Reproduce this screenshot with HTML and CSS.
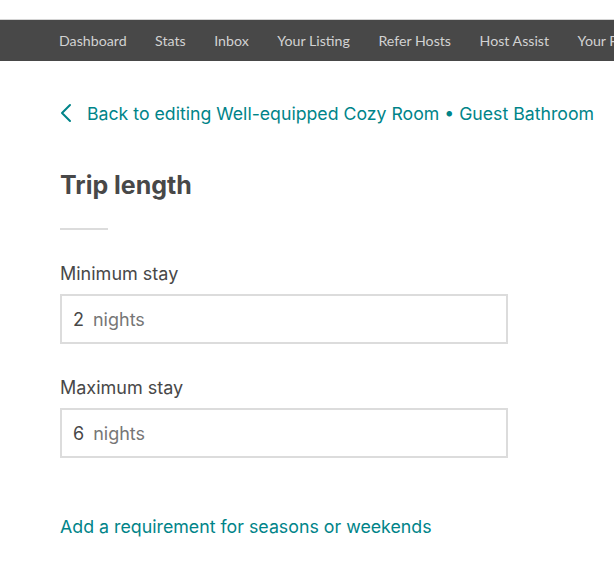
FILE: index.html
```html
<!DOCTYPE html>
<html>
<head>
<meta charset="utf-8">
<link rel="stylesheet" href="styles.css">
</head>
<body>
<div class="topspace"></div>
<nav class="navbar">
  <a class="nav-item">Dashboard</a>
  <a class="nav-item">Stats</a>
  <a class="nav-item">Inbox</a>
  <a class="nav-item">Your Listing</a>
  <a class="nav-item">Refer Hosts</a>
  <a class="nav-item">Host Assist</a>
  <a class="nav-item">Your Profile</a>
</nav>
<main class="content">
  <a class="back-link">
    <svg class="chev" width="12" height="20" viewBox="0 0 12 20"><path d="M10 2 L2 10 L10 18" fill="none" stroke="#008489" stroke-width="2" stroke-linecap="round" stroke-linejoin="round"/></svg>
    <span>Back to editing Well-equipped Cozy Room • Guest Bathroom</span>
  </a>
  <h1 class="title">Trip length</h1>
  <div class="divider"></div>
  <div class="field">
    <label class="label">Minimum stay</label>
    <div class="input"><span class="num">2</span><span class="unit">nights</span></div>
  </div>
  <div class="field">
    <label class="label">Maximum stay</label>
    <div class="input"><span class="num">6</span><span class="unit">nights</span></div>
  </div>
  <a class="add-link">Add a requirement for seasons or weekends</a>
</main>
</body>
</html>
```
FILE: styles.css
```css
* { box-sizing: border-box; }
html, body { margin: 0; padding: 0; background: #fff; overflow: hidden; }
body { font-family: "Inter", "Liberation Sans", sans-serif; color: #484848; width: 614px; }
.topspace { height: 20px; background: #fff; border-bottom: 1px solid #d4d4d4; }
.navbar { height: 41px; background: #484848; display: flex; align-items: center; gap: 28.5px; padding-left: 59px; white-space: nowrap; overflow: hidden; font-family: "Lato", "Liberation Sans", sans-serif; }
.nav-item { color: #d2d2d2; font-size: 14.2px; text-decoration: none; flex: none; }
.content { padding: 39px 0 0 60px; }
.back-link { display: flex; align-items: center; gap: 15px; color: #008489; font-size: 17.7px; text-decoration: none; white-space: nowrap; height: 26px; }
.chev { flex: none; }
.title { font-size: 25px; font-weight: 700; margin: 44px 0 0; line-height: 30px; color: #484848; }
.divider { width: 48px; height: 2px; background: #dcdcdc; margin-top: 28px; }
.field { margin-top: 32px; }
.field + .field { margin-top: 32px; }
.label { display: block; font-size: 18px; line-height: 24px; color: #484848; }
.input { width: 448px; height: 50px; border: 2px solid #dcdcdc; margin-top: 8px; display: flex; align-items: center; padding-left: 11px; font-size: 18px; }
.num { color: #484848; margin-right: 9px; }
.unit { color: #767676; }
.add-link { display: block; margin-top: 58px; color: #008489; font-size: 17.8px; text-decoration: none; }
```
